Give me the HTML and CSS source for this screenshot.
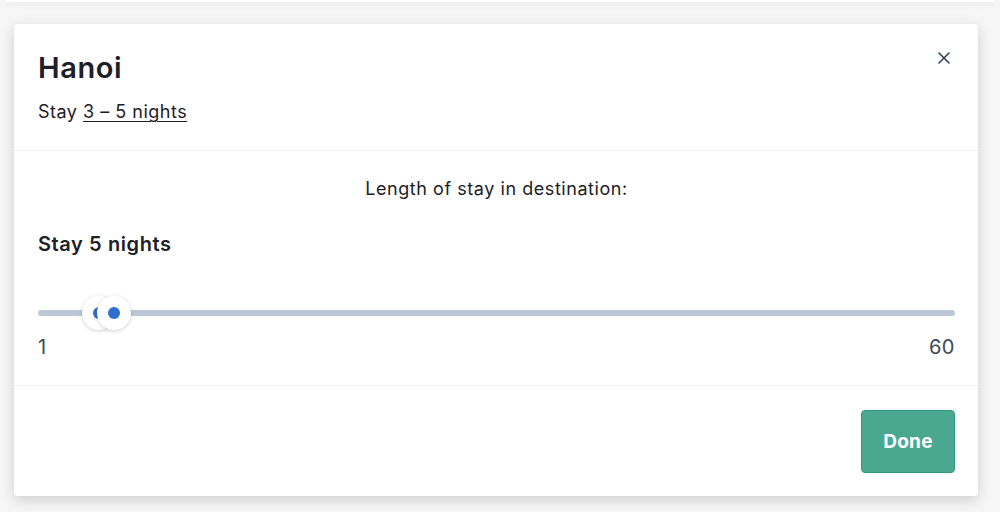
FILE: index.html
```html
<!DOCTYPE html>
<html>
<head>
<meta charset="utf-8">
<link rel="stylesheet" href="styles.css">
</head>
<body>
<div class="prev-card"></div>
<div class="modal">
  <div class="modal-header">
    <h1 class="title">Hanoi</h1>
    <p class="subtitle">Stay <span class="range">3 – 5 nights</span></p>
    <button class="close" aria-label="Close">
      <svg width="12" height="12" viewBox="0 0 12 12"><path d="M1 1L11 11M11 1L1 11" stroke="#2c3a4f" stroke-width="1.5" stroke-linecap="round"/></svg>
    </button>
  </div>
  <div class="modal-body">
    <p class="caption">Length of stay in destination:</p>
    <h2 class="stay">Stay 5 nights</h2>
    <div class="slider">
      <div class="track">
        <span class="handle h1"><span class="dot"></span></span>
        <span class="handle h2"><span class="dot"></span></span>
      </div>
      <div class="labels"><span>1</span><span>60</span></div>
    </div>
  </div>
  <div class="modal-footer">
    <button class="done">Done</button>
  </div>
</div>
</body>
</html>
```

FILE: styles.css
```css
* { box-sizing: border-box; }
html, body { margin: 0; padding: 0; }
body {
  background: #f6f6f6;
  font-family: "Inter", "Noto Sans", sans-serif;
  color: #1c1f24;
  width: 1000px;
  height: 512px;
  overflow: hidden;
}
.prev-card {
  height: 2px;
  margin: 0 6px;
  background: #fff;
  box-shadow: 0 2px 6px rgba(0,0,0,0.10);
}
.modal {
  position: relative;
  margin: 22px 22px 0 14px;
  width: 964px;
  height: 472px;
  background: #fff;
  border-radius: 4px;
  box-shadow: 0 4px 14px rgba(0,0,0,0.16);
  display: flex;
  flex-direction: column;
}
.modal-header {
  position: relative;
  height: 127px;
  padding: 27px 24px 0 24px;
  border-bottom: 1px solid #eef0f3;
}
.title {
  margin: 0;
  font-size: 29px;
  line-height: 34px;
  font-weight: 600;
  letter-spacing: 0.6px;
  color: #1d2026;
}
.subtitle {
  margin: 16px 0 0;
  font-size: 18px;
  line-height: 22px;
  letter-spacing: 0.5px;
  color: #1d2026;
}
.range { text-decoration: underline; text-underline-offset: 3px; text-decoration-thickness: 1px; }
.close {
  position: absolute;
  top: 28px;
  right: 28px;
  border: 0;
  background: none;
  padding: 0;
  width: 12px;
  height: 12px;
  display: block;
}
.close svg { display: block; }
.modal-body {
  height: 235px;
  padding: 26px 23px 0 24px;
  border-bottom: 1px solid #eef0f3;
}
.caption {
  margin: 0;
  text-align: center;
  font-size: 18px;
  line-height: 24px;
  letter-spacing: 0.55px;
  color: #1d2026;
}
.stay {
  margin: 31px 0 0;
  font-size: 20px;
  line-height: 24px;
  font-weight: 600;
  letter-spacing: 0.6px;
  color: #1d2026;
}
.slider { margin-top: 54px; }
.track {
  position: relative;
  height: 6px;
  border-radius: 3px;
  background: #bcc8d6;
}
.handle {
  position: absolute;
  top: 50%;
  width: 34px;
  height: 34px;
  margin: -17px 0 0 -17px;
  border-radius: 50%;
  background: #fff;
  box-shadow: 0 1px 4px rgba(0,0,0,0.18);
  display: flex;
  align-items: center;
  justify-content: center;
}
.h1 { left: 61px; }
.h2 { left: 76px; }
.dot {
  width: 12px;
  height: 12px;
  border-radius: 50%;
  background: #2f6fd0;
}
.labels {
  display: flex;
  justify-content: space-between;
  margin-top: 19px;
  font-size: 20px;
  line-height: 24px;
  letter-spacing: 0.5px;
  color: #3a4a5e;
}
.modal-footer {
  flex: 1;
  display: flex;
  justify-content: flex-end;
  align-items: flex-start;
  padding: 24px 23px 0 0;
}
.done {
  width: 94px;
  height: 63px;
  border: 1px solid #2f9a7c;
  border-radius: 4px;
  background: #4aa890;
  color: #fff;
  font-family: "Inter", "Noto Sans", sans-serif;
  font-size: 19px;
  font-weight: 700;
  letter-spacing: 0.3px;
}
```
